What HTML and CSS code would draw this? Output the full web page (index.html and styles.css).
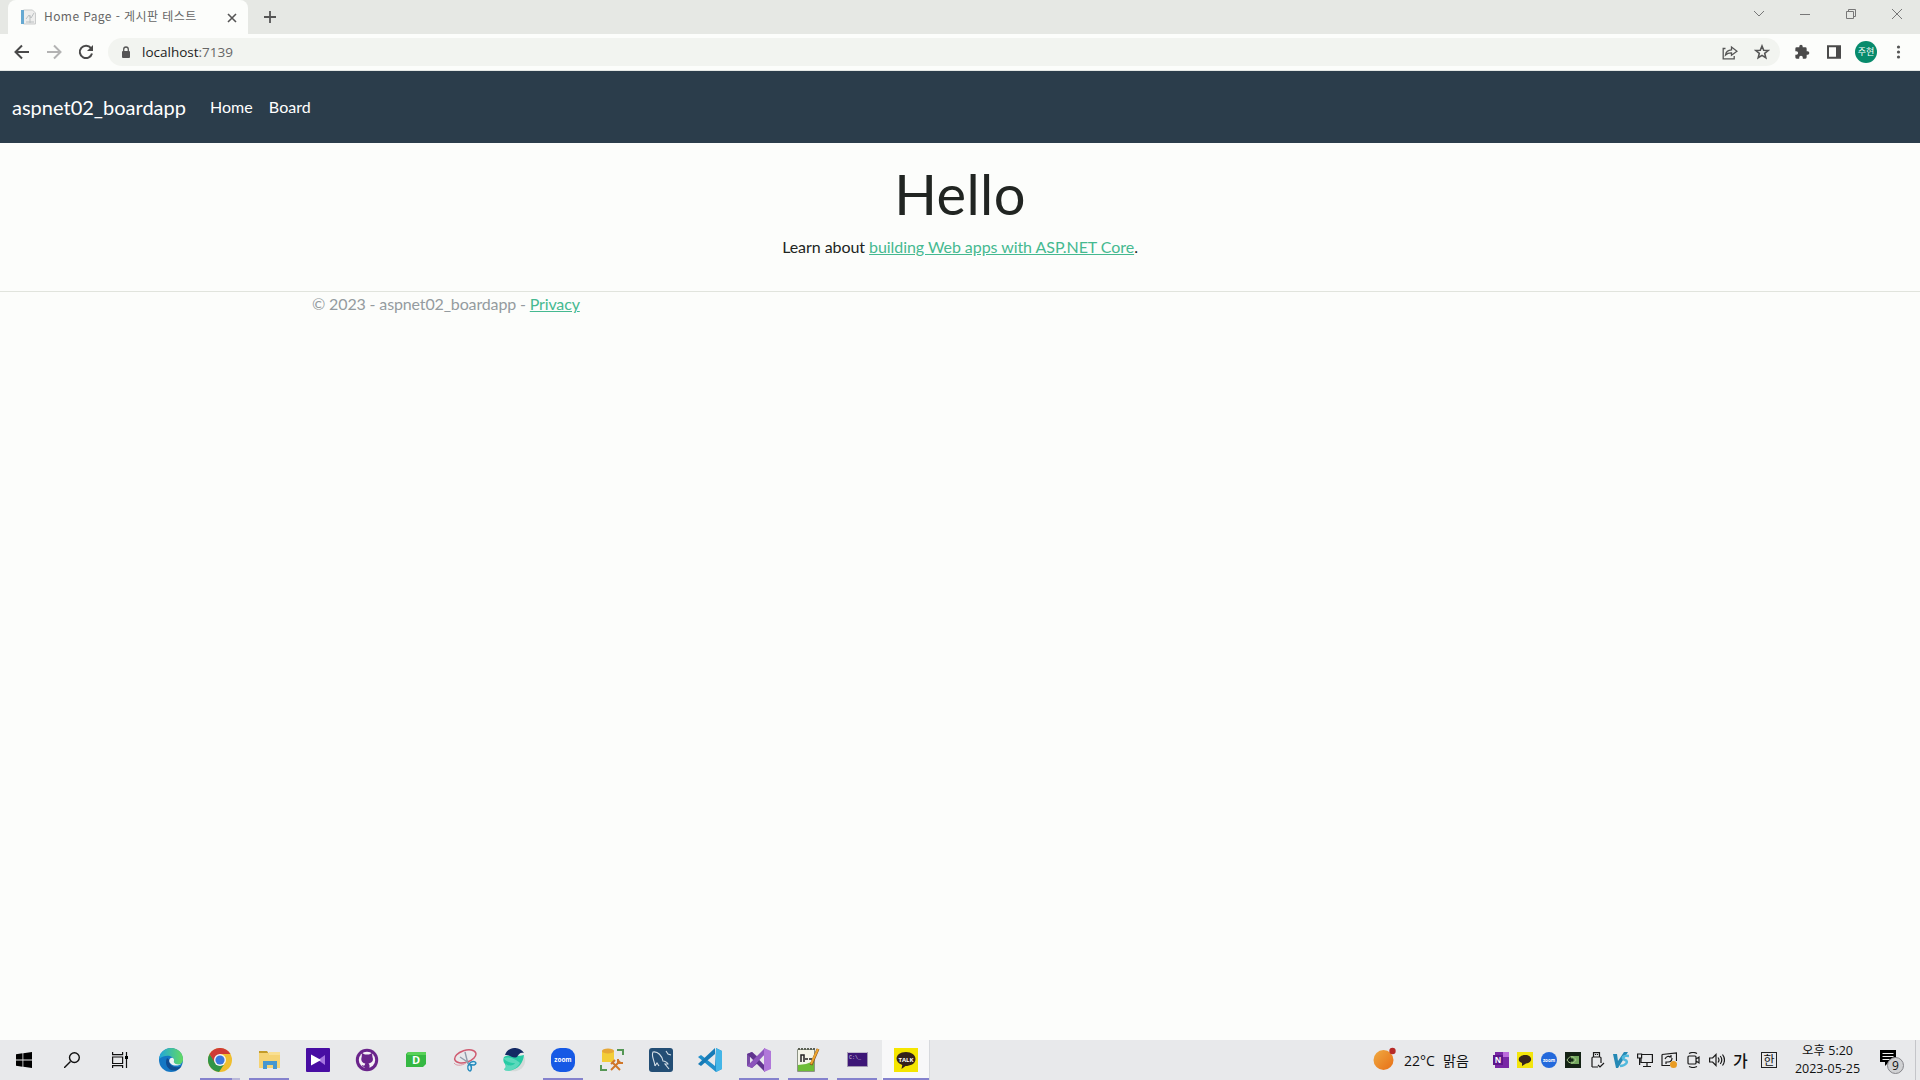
FILE: index.html
```html
<!DOCTYPE html>
<html lang="ko">
<head>
<meta charset="utf-8">
<title>Home Page - 게시판 테스트</title>
<link rel="stylesheet" href="styles.css">
</head>
<body>
<div class="screen">
  <div class="tabstrip">
    <div class="tab">
      <svg class="favicon" width="16" height="16" viewBox="0 0 16 16"><path fill="#eeeeed" stroke="#c9cbcb" d="M3.5 1h9l3 3v11h-12z"/><path fill="#66a9d2" d="M1 1h3v14H1z"/><path fill="none" stroke="#bbc0c1" d="M6 10l3-4 2 3 3-5M6 13h8M10 6v8"/></svg>
      <span class="tab-title">Home Page - 게시판 테스트</span>
      <svg class="tab-close" width="10" height="10" viewBox="0 0 10 10"><path d="M1 1l8 8M9 1L1 9" stroke="#555" stroke-width="1.6"/></svg>
    </div>
    <svg class="new-tab" width="12" height="12" viewBox="0 0 12 12"><path d="M6 0v12M0 6h12" stroke="#555" stroke-width="1.8"/></svg>
    <div class="window-controls">
      <svg width="46" height="28" viewBox="0 0 46 28"><path d="M18 11l5 5 5-5"/></svg>
      <svg width="46" height="28" viewBox="0 0 46 28"><path d="M18 14.5h10"/></svg>
      <svg width="46" height="28" viewBox="0 0 46 28"><path d="M18.500 11.500h7v7h-7zM20.500 11v-1.500h7v7H26"/></svg>
      <svg width="46" height="28" viewBox="0 0 46 28"><path d="M18 9l10 10M28 9L18 19"/></svg>
    </div>
  </div>

  <div class="toolbar">
    <div class="nav-buttons">
      <svg width="16" height="16" viewBox="0 0 16 16"><path d="M15 8H2M8 1.500L1.500 8 8 14.500" stroke="#494949"/></svg>
      <svg width="16" height="16" viewBox="0 0 16 16"><path d="M1 8h13M8 1.500L14.500 8 8 14.500" stroke="#b3b3b3"/></svg>
      <svg width="16" height="16" viewBox="0 0 16 16"><path d="M13 4.200A6.200 6.200 0 1 0 14 9.500" stroke="#494949"/><path d="M15 1v6H9z" fill="#494949" stroke="none"/></svg>
    </div>
    <div class="address">
      <svg width="10" height="13" viewBox="0 0 10 13"><rect x="1" y="5" width="8" height="7" rx="1" fill="#555"/><path d="M2.700 6V3.300a2.300 2.300 0 0 1 4.600 0V6" fill="none" stroke="#555" stroke-width="1.300"/></svg>
      <span class="url">localhost<span class="port">:7139</span></span>
      <div class="address-actions">
        <svg width="16" height="16" viewBox="0 0 16 16"><path d="M3.500 4.500H1.200v10.300h11V12M3.500 11c.5-3.600 2.600-5 6-5.200V3L15 7.200l-5.500 4V8.800c-2.600-.1-4.200.4-6 2.200z"/></svg>
        <svg width="16" height="16" viewBox="0 0 16 16"><path stroke-width="1.600" d="M8 2l1.700 4.200 4.500.3-3.500 2.900 1.100 4.400L8 11.400l-3.800 2.400 1.100-4.400-3.500-2.900 4.500-.3z"/></svg>
      </div>
    </div>
    <div class="toolbar-actions">
      <svg width="16" height="16" viewBox="0 0 24 24"><path fill="#4a4a4a" d="M20.500 11H19V7a2 2 0 0 0-2-2h-4V3.500a2.500 2.500 0 0 0-5 0V5H4a2 2 0 0 0-2 2v3.800h1.500a2.700 2.700 0 0 1 0 5.400H2V20a2 2 0 0 0 2 2h3.800v-1.500a2.700 2.700 0 0 1 5.400 0V22H17a2 2 0 0 0 2-2v-4h1.500a2.500 2.500 0 0 0 0-5z"/></svg>
      <svg width="16" height="16" viewBox="0 0 16 16"><path fill="none" stroke="#4a4a4a" stroke-width="2" d="M2 2.200h12v11.600H2z"/><path fill="#4a4a4a" d="M10 2h5v12h-5z"/></svg>
      <span class="avatar">주현</span>
      <svg width="16" height="16" viewBox="0 0 16 16" fill="#555"><circle cx="8.500" cy="3" r="1.600"/><circle cx="8.500" cy="8" r="1.600"/><circle cx="8.500" cy="13" r="1.600"/></svg>
    </div>
  </div>

  <header class="navbar">
    <a class="brand">aspnet02_boardapp</a>
    <a class="nav-link">Home</a>
    <a class="nav-link">Board</a>
  </header>

  <main class="content">
    <h1>Hello</h1>
    <p>Learn about <a class="link">building Web apps with ASP.NET Core</a>.</p>
  </main>
  <footer class="footer"><div class="container">© 2023 - aspnet02_boardapp - <a class="link">Privacy</a></div></footer>

  <div class="taskbar">
    <div class="system-buttons">
      <svg width="16" height="16" viewBox="0 0 16 16"><path d="M0 2.200L6.500 1.300V7.500H0zM7.300 1.200L16 0v7.500H7.300zM0 8.400h6.500v6.300L0 13.800zM7.300 8.400H16V16l-8.700-1.200z"/></svg>
      <svg width="16" height="16" viewBox="0 0 16 16"><path fill="none" stroke="#111" stroke-width="1.400" d="M0 16l6.500-6.500"/><circle cx="10.400" cy="5.600" r="4.900" fill="none" stroke="#111" stroke-width="1.400"/></svg>
      <svg width="16" height="16" viewBox="0 0 16 16"><path fill="none" stroke="#111" stroke-width="1.200" d="M.6 0v2.700h10V0M.6 5h10v6.500H.6zM.6 16v-2.400h10V16M14.500 0v16"/><path d="M13 4h3v3h-3z"/></svg>
    </div>
    <div class="apps">
      <div class="app"><svg width="24" height="24" viewBox="0 0 24 24"><defs><linearGradient id="edge-top" x2="1"><stop stop-color="#20a6dc"/><stop offset="1" stop-color="#63da61"/></linearGradient></defs><circle cx="12" cy="12" r="12" fill="#1477c4"/><path fill="url(#edge-top)" d="M0 11C1 4 6 0 12 0c7 0 12 5 12 11 0 4-3 6-6 6-4 0-5-2-3.500-4C16 8 7 5 0 11z"/><path fill="#104c91" d="M8 10c-3 6 1 13 8 12.500 3-.5 5-2 6.500-4.500-6 3-13 0-12-6z"/><path fill="#eef1f4" d="M14 10c-4-1-5 4-2 6 3 2.500 8 2 12-1-2 2-8 2-9-.5-.5-1.500 1-2.500-1-4.500z"/></svg></div>
      <div class="app running stacked"><svg width="24" height="24" viewBox="0 0 24 24"><circle cx="12" cy="12" r="12" fill="#efbe2f"/><path fill="#319547" d="M1.600 6A12 12 0 0 0 11 24l6-9H8z"/><path fill="#cf3b36" d="M1.600 6A12 12 0 0 1 22.400 6H12l-5 9z"/><circle cx="12" cy="12" r="6" fill="#f5f5f4"/><circle cx="12" cy="12" r="4.600" fill="#3a78dd"/></svg></div>
      <div class="app running"><svg width="24" height="24" viewBox="0 0 24 24"><path fill="#c39b28" d="M2 3h8l2 3H2z"/><path fill="#f5d374" d="M2 5h21v15H2z"/><path fill="#f9df91" d="M12 4h11v3H12z"/><path fill="#4597d0" d="M6 13h14v8h-4v-4h-6v4H6z"/></svg></div>
      <div class="app"><svg width="24" height="24" viewBox="0 0 24 24"><rect width="24" height="24" rx="1" fill="#480da3"/><path fill="#a574df" d="M12 12l7-5v10z"/><path fill="#fff" d="M5 6.500l10 5.500-10 5.500z"/></svg></div>
      <div class="app"><svg width="24" height="24" viewBox="0 0 24 24"><circle cx="12" cy="12" r="11.200" fill="#6a248b"/><circle cx="12" cy="12" r="8.200" fill="#f6f1f7"/><path fill="#6a248b" d="M7 5l3 1.500h4L17 5l.5 4c1.500 4-1 6-4 6.500l1 1.500v4h-5v-2c-2 0-2-1-3-2 1 0 2 1 3 .5l.8-2C7 15 5.500 12 6.700 9z"/></svg></div>
      <div class="app"><svg width="24" height="24" viewBox="0 0 24 24"><path fill="#35b843" d="M4 4h18v12l-3 3H2V6z"/><path fill="#59d258" d="M4 4h18v3H3z"/><text x="12" y="16" class="glyph letter-d">D</text></svg></div>
      <div class="app"><svg width="24" height="24" viewBox="0 0 24 24" fill="none"><ellipse cx="12.500" cy="8.500" rx="11" ry="6" transform="rotate(-18 12 9)" stroke="#cf5b70" stroke-width="1.500"/><path stroke="#dc98a5" d="M1 15c3 4 10 2 13-1"/><path stroke="#909cab" stroke-width="1.400" d="M12 4l3 12M7 9l9 6"/><path fill="#d7f0fa" stroke="#258abd" stroke-width="1.500" d="M16 16c4-5 10-1 5 1-1 0-4 0-5-1 4 2 2 7 1 7s-4-3-1-7z"/></svg></div>
      <div class="app"><svg width="24" height="24" viewBox="0 0 24 24"><path fill="#d5dad9" d="M8 23L22 8c4 8-3 17-14 15z"/><path fill="#28cba5" d="M2 9c5-3 15 0 20-2-1 8-5 14-15 16-3 0-5-1-5-2 2-1 2-3 1-5-2-2-2-5-1-7z"/><path fill="#132964" d="M3 7C6-2 18-2 22 5c-4-1-5 1-7 4-5 2-5-2-12-2z"/><path fill="#9ceada" d="M2 10c6-2 13 2 16 5-3 5-7 7-11 8-3 0-5-1-5-2 3-1 2-4 2-5 4 3 8 1 9-1-5 0-8-1-12-5z" opacity=".45"/></svg></div>
      <div class="app running"><svg width="24" height="24" viewBox="0 0 24 24"><rect width="24" height="24" rx="9" fill="#1659e5"/><text x="12" y="13.800" class="glyph zoom-large">zoom</text></svg></div>
      <div class="app"><svg width="24" height="24" viewBox="0 0 24 24"><path fill="#f3cd38" d="M2 3l7-2 5 2v11H2z"/><ellipse cx="8" cy="3" rx="6" ry="2.500" fill="#e6a736"/><path fill="none" stroke="#559755" stroke-width="2" d="M17 2h6v5M1 17v5h6"/><path fill="none" stroke="#d0772a" stroke-width="2" d="M11 22l9-9M12 14l8 8M11 16l4-4M18 11v4h5"/></svg></div>
      <div class="app"><svg width="24" height="24" viewBox="0 0 24 24"><rect width="24" height="24" rx="3" fill="#234e75"/><path fill="none" stroke="#d5e0e8" stroke-width="1.100" d="M6 18C5 11 2 8 4 4c5-1 9 4 10 9 2 0 5 2 5 3h-3l4 5M6 18l2-3 2 3M17 3l2 3 3 1"/></svg></div>
      <div class="app"><svg width="24" height="24" viewBox="0 0 24 24"><path fill="#218fcb" d="M18 0l6 3v18l-6 3L0 9l3-2 14 11z"/><path fill="#167bb7" d="M0 16l3 2L17 6V0z"/><path fill="#43b5e7" d="M18 0l6 3v18l-6 3z"/></svg></div>
      <div class="app running"><svg width="24" height="24" viewBox="0 0 24 24"><path fill="#784aa5" fill-rule="evenodd" d="M0 6l5-2 6 5 7-9v24l-7-9-6 5-5-2zM3 9v6l3-3zM11 12l7 6V6z"/><path fill="#5f348e" d="M5 4l13 14v6L0 6z"/><path fill="#8c55bc" d="M5 20L18 6V0L0 18z"/><path fill="#b077d9" d="M17 0l7 3v18l-7 3z"/><path fill="#e7e3ed" d="M3 9l3 3-3 3z"/></svg></div>
      <div class="app running"><svg width="24" height="24" viewBox="0 0 24 24"><path fill="#f4f5e8" stroke="#8d9486" d="M1.500 1.500h17v22h-17z"/><path fill="#6dbd37" d="M2 17l8-1 8-3v10H2z"/><path stroke="#5b6155" stroke-dasharray="2 1" stroke-width="2" d="M2 1h17"/><path fill="none" stroke="#222" stroke-width="1.500" d="M5 14V7h3v7M9 11h3M13 11h3"/><path stroke="#8a5520" stroke-width="3" d="M22 1l-7 16"/><path stroke="#eda62f" stroke-width="2" d="M22 1l-7 15"/></svg></div>
      <div class="app running"><svg width="24" height="24" viewBox="0 0 24 24"><path fill="#3d1677" stroke="#a197b1" d="M2.500 4.500h20v14h-20z"/><path fill="#c2bbce" d="M3 4h19v1H3z"/><text x="4" y="11" class="terminal-prompt">C:\_</text></svg></div>
      <div class="app running active"><svg width="24" height="24" viewBox="0 0 24 24"><path fill="#f5e500" d="M0 0h24v24H0z"/><path fill="#35211b" d="M12 4c5.500 0 9.500 3 9.500 7 0 5-5.500 7-10 7l-4 3 .8-4C-1 14 1.500 4 12 4z"/><text x="12" y="13.500" class="glyph talk">TALK</text></svg></div>
    </div>

    <div class="tray">
      <div class="weather"><svg width="24" height="24" viewBox="0 0 24 24"><defs><linearGradient id="sun" x2="1" y2="1"><stop stop-color="#efaa42"/><stop offset="1" stop-color="#e86f16"/></linearGradient></defs><circle cx="10.500" cy="14" r="10" fill="url(#sun)"/><circle cx="19.500" cy="5" r="3.200" fill="#b62a27"/></svg><span class="temperature">22°C</span><span>맑음</span></div>
      <div class="tray-icons">
        <svg width="16" height="16" viewBox="0 0 16 16"><path fill="#7927a5" d="M2 0h14v16H2z"/><path fill="#bd6bdc" d="M10 0h6v5h-6z"/><path fill="#5e168b" d="M0 3h10v10H0z"/><text x="5" y="11" class="glyph note">N</text></svg>
        <svg width="16" height="16" viewBox="0 0 16 16"><path fill="#f3e50c" d="M0 0h16v16H0z"/><path fill="#36251a" d="M8 3c8 0 8 8 1 8.500L5 14v-3C-1 9 2 3 8 3z"/></svg>
        <svg width="16" height="16" viewBox="0 0 16 16"><circle cx="8" cy="8" r="8" fill="#2369dc"/><text x="8" y="9.500" class="glyph zoom-small">zoom</text></svg>
        <svg width="16" height="16" viewBox="0 0 16 16"><path fill="#142215" d="M0 0h16v16H0z"/><path fill="#73a75e" d="M6 4h8v8H6z"/><path fill="none" stroke="#a5c889" d="M2 8c3-5 7-4 9 0-2 4-7 4-9 0z"/><circle cx="7" cy="8" r="1.700" fill="#132615"/></svg>
        <svg class="outline" width="16" height="16" viewBox="0 0 16 16"><path d="M4.500 5V.7h6V5M3 15V6q0-1 1-1h7q1 0 1 1v5M3 15h6M9 13l2 2 4-4M6.500 2v1M8.500 2v1"/></svg>
        <svg width="16" height="16" viewBox="0 0 16 16"><path fill="#2589b5" d="M0 2h4l1 7 6-9h4L5 16H3z"/><path fill="none" stroke="#51b9dd" stroke-width="2.500" d="M16 4c-6-1-8 2-4 4 4 1 1 6-5 6"/></svg>
        <svg class="outline" width="16" height="16" viewBox="0 0 16 16"><path d="M5 2.500h10.400v8H4V6M10 11v3.500M6 14.500h8M.6 2h4v4h-4zM2.600 6v7"/></svg>
        <svg class="outline" width="16" height="16" viewBox="0 0 16 16"><path d="M1 2.500L15.500.8V9M9 13.500H1v-11M4 7q2-4 6-2V3m0 2H8m3 1q0 4-4 4H5m0 2v-2h2"/><circle cx="12.500" cy="12.500" r="3.500" fill="#e99c24" stroke="none"/></svg>
        <svg class="outline" width="16" height="16" viewBox="0 0 16 16"><path d="M4 1.500q4-2 8 0M4 14.500q4 2 8 0M4 4h6q1 0 1 1v6q0 1-1 1H4q-1 0-1-1V5q0-1 1-1zM11 7l3-2v6l-3-2"/></svg>
        <svg class="outline" width="16" height="16" viewBox="0 0 16 16"><path d="M.6 6h3L7 2.500v11L3.600 10h-3zM9 5.500q2 2.500 0 5M11.300 4q3 4 0 8M13.500 2.500q4 5.500 0 11"/></svg>
        <span class="ime-mode">가</span>
      </div>
      <span class="ime-language">한</span>
      <div class="clock"><span>오후 5:20</span><span>2023-05-25</span></div>
      <div class="notifications"><svg width="24" height="26" viewBox="0 0 24 26"><path d="M0 1h16v12H9l-4 4v-4H0z"/><path stroke="#eee" stroke-width="1.200" d="M2.500 4.500h11M2.500 7.500h11M2.500 10.500h7"/><circle cx="15.500" cy="16.500" r="8" fill="#d0d1d3" stroke="#85858a"/><text x="15.500" y="20.500" class="notification-count">9</text></svg></div>
      <div class="show-desktop"></div>
    </div>
  </div>
</div>
</body>
</html>
```
FILE: styles.css
```css
* { box-sizing: border-box; }
body { margin: 0; background: #fcfdfb; color: #212522; font-family: Lato, sans-serif; font-size: 16px; line-height: 1.5; }
svg { display: block; flex: none; }
.screen { display: flex; flex-direction: column; width: 1920px; height: 1080px; overflow: hidden; }
.tabstrip { height: 34px; flex: none; display: flex; background: #e6e8e4; }
.tab { display: flex; align-items: center; width: 240px; height: 34px; margin-left: 8px; padding-left: 12px; border-radius: 8px 8px 0 0; background: #fcfdfb; }
.tab-title { width: 154px; margin-top: -2px; margin-left: 8px; margin-right: 29px; white-space: nowrap; color: #666; font-family: "Noto Sans CJK KR", sans-serif; font-size: 12px; letter-spacing: .42px; }
.tab-close { margin-top: 1px; }
.new-tab { margin: 11px 0 0 16px; }
.window-controls { display: flex; margin-left: auto; }
.window-controls svg { fill: none; stroke: #777; stroke-width: 1; }
.toolbar { height: 37px; flex: none; display: flex; align-items: center; padding: 0 14px; border-bottom: 1px solid #e4e7e4; background: #fcfdfb; }
.nav-buttons { display: flex; width: 94px; gap: 16px; }
.nav-buttons svg { fill: none; stroke-width: 2; }
.address { display: flex; align-items: center; width: 1672px; height: 28px; padding: 0 10px 0 13px; border-radius: 14px; background: #f2f4f0; }
.url { margin-left: 11px; color: #222; font-family: "Open Sans", sans-serif; font-size: 13.5px; }
.port { color: #666; }
.address-actions { display: flex; gap: 16px; margin-left: auto; }
.address-actions svg { fill: none; stroke: #555; stroke-width: 1.3; }
.toolbar-actions { display: flex; align-items: center; flex: 1; margin-left: 14px; gap: 16px; }
.avatar { width: 22px; height: 22px; margin: 0 -3px; flex: none; border-radius: 50%; background: #078b6c; color: #fff; font: 9px/22px "Noto Sans CJK KR", sans-serif; text-align: center; }
.navbar { display: flex; align-items: center; height: 72px; flex: none; padding-left: 12px; background: #2b3d4b; color: #fff; }
.brand { margin-right: 16px; font-size: 20px; }
.nav-link { padding: 0 8px; letter-spacing: .06px; }
.content { padding-top: 17px; height: 149px; flex: none; border-bottom: 1px solid #e1e4dd; text-align: center; }
.content h1 { margin: 0 0 8px; font-size: 56px; font-weight: 400; line-height: 67px; letter-spacing: .4px; }
.content p { margin: 0; letter-spacing: -.06px; }
.link { color: #45b990; text-decoration: underline; }
.footer { color: #949b9f; letter-spacing: -.145px; }
.container { width: 1296px; margin: 0 auto; }
.taskbar { display: flex; height: 40px; margin-top: auto; background: #e8e9eb; font-family: "Open Sans", "Noto Sans CJK KR", sans-serif; color: #111; }
.system-buttons { display: flex; align-items: center; width: 147px; padding-left: 16px; gap: 32px; }
.apps { display: flex; gap: 1px; }
.app { display: flex; justify-content: center; width: 48px; padding-top: 8px; background: linear-gradient(#8582cd, #8582cd) center bottom / 0 2px no-repeat; }
.running { background-size: 40px 2px; }
.stacked { background-image: linear-gradient(90deg, #8582cd 80%, #b9b8d9 80%); }
.active { background-color: #f8f8f9; background-size: 46px 2px; border-right: 1px solid #d7d9dd; }
.tray { display: flex; align-items: center; margin-left: auto; width: 547px; font-size: 14px; }
.weather { display: flex; align-items: center; width: 120px; }
.weather svg { margin-top: -4px; }
.temperature { width: 39px; margin-left: 7px; }
.tray-icons { display: flex; align-items: center; gap: 8px; }
.outline { fill: none; stroke: #191919; stroke-width: 1.2; }
.ime-mode { width: 16px; font: 500 16px/20px "Noto Sans CJK KR", sans-serif; }
.ime-language { width: 16px; height: 16px; margin-left: 12px; border: 1px solid #222; font: 12px/13px "Noto Sans CJK KR", sans-serif; text-align: center; }
.clock { display: flex; flex-direction: column; align-items: center; width: 101px; font-size: 12.5px; line-height: 18px; }
.notifications { margin-left: 2px; margin-top: 3px; }
.show-desktop { width: 1px; height: 40px; margin-left: auto; margin-right: 4px; background: #c4c5c9; }
.glyph { fill: #fff; font-family: "Open Sans", sans-serif; font-weight: 700; text-anchor: middle; }
.letter-d { font-size: 11px; }
.zoom-large { font-size: 6.4px; }
.zoom-small { font-size: 4.5px; }
.talk { font-size: 6px; }
.note { font-size: 8px; }
.terminal-prompt { fill: #d9d3e3; font: 5px "Liberation Mono", monospace; }
.notification-count { fill: #111; font: 12px "Open Sans", sans-serif; text-anchor: middle; }
```
